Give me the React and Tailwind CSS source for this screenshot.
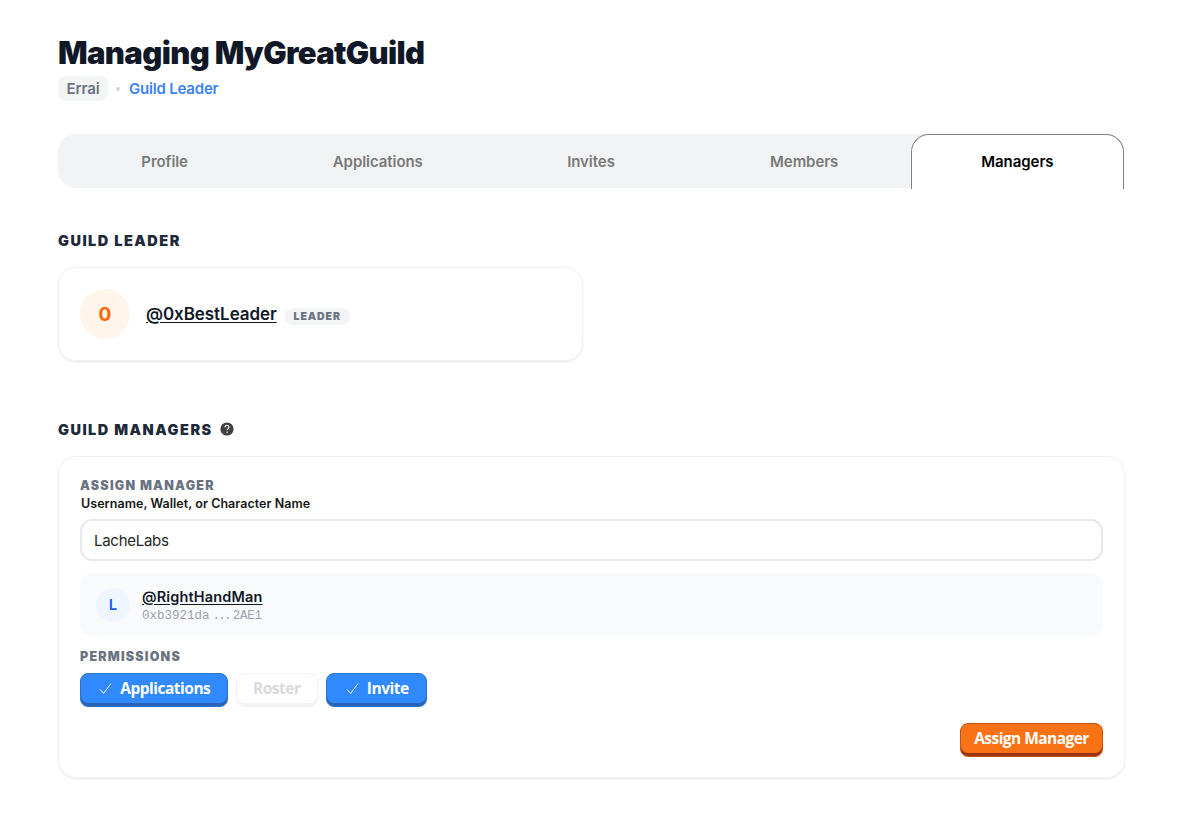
import { useState } from "react";
import clsx from "clsx";

const TABS = ["Profile", "Applications", "Invites", "Members", "Managers"];

function CheckMark() {
  return (
    <svg className="h-[13px] w-[13px]" viewBox="0 0 13 13" fill="none">
      <path d="M1 7.4 4.6 11.4 12 1.6" stroke="currentColor" strokeWidth="1" />
    </svg>
  );
}

function HelpIcon() {
  return (
    <svg className="h-[14px] w-[14px]" viewBox="0 0 14 14" fill="none">
      <circle cx="7" cy="7" r="6.6" fill="#404040" />
      <path
        d="M5 5.4C5 4.1 5.9 3.4 7 3.4s2 .7 2 1.8C9 6.6 7.1 6.7 7.1 8.2"
        stroke="#fff"
        strokeWidth="1.1"
      />
      <circle cx="7.1" cy="10.2" r=".7" fill="#fff" />
    </svg>
  );
}

function Tabs({ active, onChange }) {
  return (
    <nav className="mt-[33px] grid h-[54px] grid-cols-5 rounded-[18px] bg-[#f2f3f5]">
      {TABS.map((tab) => (
        <button
          key={tab}
          onClick={() => onChange(tab)}
          className={clsx(
            "text-[15px] font-semibold tracking-[-0.06px]",
            active === tab
              ? "h-[55px] rounded-t-[18px] border border-b-0 border-[#7c808c] bg-white text-black"
              : "pt-px text-[#797979]"
          )}
        >
          {tab}
        </button>
      ))}
    </nav>
  );
}

function PermissionButton({ label, active, onClick, className }) {
  return (
    <button
      onClick={onClick}
      className={clsx(
        "flex h-[34px] items-center justify-center gap-[8px] rounded-lg border pb-[3px] font-['Open_Sans',sans-serif] text-[15.5px] font-bold tracking-[-0.5px]",
        active
          ? "border-[#2f72cc] bg-[#3089ff] text-white shadow-[inset_0_-3px_0_#2864b4]"
          : "border-[#f3f3f3] bg-white text-[#dadada] shadow-[inset_0_-3px_0_#f3f3f3]",
        className
      )}
    >
      {active && <CheckMark />}
      {label}
    </button>
  );
}

export default function App() {
  const [tab, setTab] = useState("Managers");
  const [query, setQuery] = useState("LacheLabs");
  const [permissions, setPermissions] = useState({
    applications: true,
    roster: false,
    invite: true,
  });

  const toggle = (key) =>
    setPermissions((prev) => ({ ...prev, [key]: !prev[key] }));

  return (
    <div className="h-[840px] w-[1200px] bg-white pt-[33px] pl-[58px] font-[Inter,sans-serif]">
      <div className="w-[1066px]">
        <h1 className="h-[40px] text-[31px] leading-[40px] font-black tracking-[-0.64px] text-[#101828]">
          Managing MyGreatGuild
        </h1>
        <div className="mt-[3px] flex h-[25px] items-center text-[15px] font-semibold tracking-[-0.1px]">
          <span className="flex h-[25px] w-[50px] items-center justify-center rounded-lg bg-[#f3f4f6] pt-px text-[#6a7282]">
            Errai
          </span>
          <span className="ml-[8px] h-1 w-1 rounded-full bg-[#d1d5dc]" />
          <span className="ml-[9px] pt-px tracking-[-0.2px] text-[#3b82f6]">
            Guild Leader
          </span>
        </div>

        <Tabs active={tab} onChange={setTab} />

        <h2 className="mt-[43px] text-[14.5px] leading-5 font-black tracking-[1.5px] text-[#1e2939]">
          GUILD LEADER
        </h2>
        <section className="mt-[16px] flex h-[94px] w-[525px] items-center rounded-[18px] border border-[#f1f1f3] pl-[21px] shadow-[0_1px_2px_rgba(0,0,0,0.1)]">
          <div className="flex h-[50px] w-[50px] items-center justify-center rounded-full bg-[#fff5eb] pt-[2px] text-[19px] font-bold text-[#ff6500]">
            0
          </div>
          <a className="ml-[16px] pt-px text-[17px] font-semibold tracking-[-0.06px] text-[#101828] underline underline-offset-2">
            @0xBestLeader
          </a>
          <span className="mt-[5px] ml-[8px] flex h-[17px] w-[65px] items-center justify-center rounded-lg bg-[#f3f4f6] pt-px text-[10.5px] font-black tracking-[0.95px] text-[#6a7282]">
            LEADER
          </span>
        </section>

        <div className="mt-[58px] flex items-center gap-[7px]">
          <h2 className="pt-px text-[14.5px] leading-[19px] font-black tracking-[1.5px] text-[#1e2939]">
            GUILD MANAGERS
          </h2>
          <HelpIcon />
        </div>

        <section className="mt-[17px] h-[322px] w-[1067px] rounded-[18px] border border-[#f1f1f3] px-[21px] pt-[20px] shadow-[0_1px_2px_rgba(0,0,0,0.1)]">
          <h3 className="text-[12.5px] leading-[18px] font-black tracking-[1.22px] text-[#6a7282]">
            ASSIGN MANAGER
          </h3>
          <label className="block pl-px text-[12.5px] leading-[18px] font-semibold tracking-[0.05px] text-[#171717]">
            Username, Wallet, or Character Name
          </label>
          <input
            value={query}
            onChange={(e) => setQuery(e.target.value)}
            className="mt-[6px] block h-[42px] w-full rounded-xl border-2 border-[#e9e9ed] px-[12px] text-[15px] tracking-[-0.28px] text-[#262626] outline-none"
          />

          <div className="mt-[12px] flex h-[63px] items-center rounded-xl bg-[#f9fafb] pl-[16px]">
            <div className="flex h-[34px] w-[34px] items-center justify-center rounded-full bg-[#eff6ff] pt-px text-[15px] font-semibold text-[#155dfc]">
              L
            </div>
            <div className="ml-[12px] pt-[2px]">
              <a className="block text-[14.5px] leading-5 font-semibold tracking-[0.16px] text-[#101828] underline underline-offset-2">
                @RightHandMan
              </a>
              <div className="flex gap-[3px] pt-px font-['Liberation_Mono',monospace] text-[12.5px] leading-[17px] text-[#99a1af]">
                <span>0xb3921da</span>
                <span className="tracking-[-1.8px]">...</span>
                <span className="tracking-[-0.2px]">2AE1</span>
              </div>
            </div>
          </div>

          <h3 className="mt-[12px] text-[12.5px] leading-[18px] font-black tracking-[1.2px] text-[#6a7282]">
            PERMISSIONS
          </h3>
          <div className="mt-[7px] flex gap-[8px]">
            <PermissionButton
              label="Applications"
              className="w-[147.5px] pl-[2px]"
              active={permissions.applications}
              onClick={() => toggle("applications")}
            />
            <PermissionButton
              label="Roster"
              className="w-[82.5px]"
              active={permissions.roster}
              onClick={() => toggle("roster")}
            />
            <PermissionButton
              label="Invite"
              className="w-[100.5px] pl-[2px]"
              active={permissions.invite}
              onClick={() => toggle("invite")}
            />
          </div>

          <div className="mt-[16px] flex justify-end">
            <button className="flex h-[34px] w-[143px] items-center justify-center rounded-lg border border-[#c2560f] bg-[#f97316] pb-[3px] font-['Open_Sans',sans-serif] text-[15.5px] font-bold tracking-[-0.55px] text-white shadow-[inset_0_-3px_0_#9a3412]">
              Assign Manager
            </button>
          </div>
        </section>
      </div>
    </div>
  );
}
